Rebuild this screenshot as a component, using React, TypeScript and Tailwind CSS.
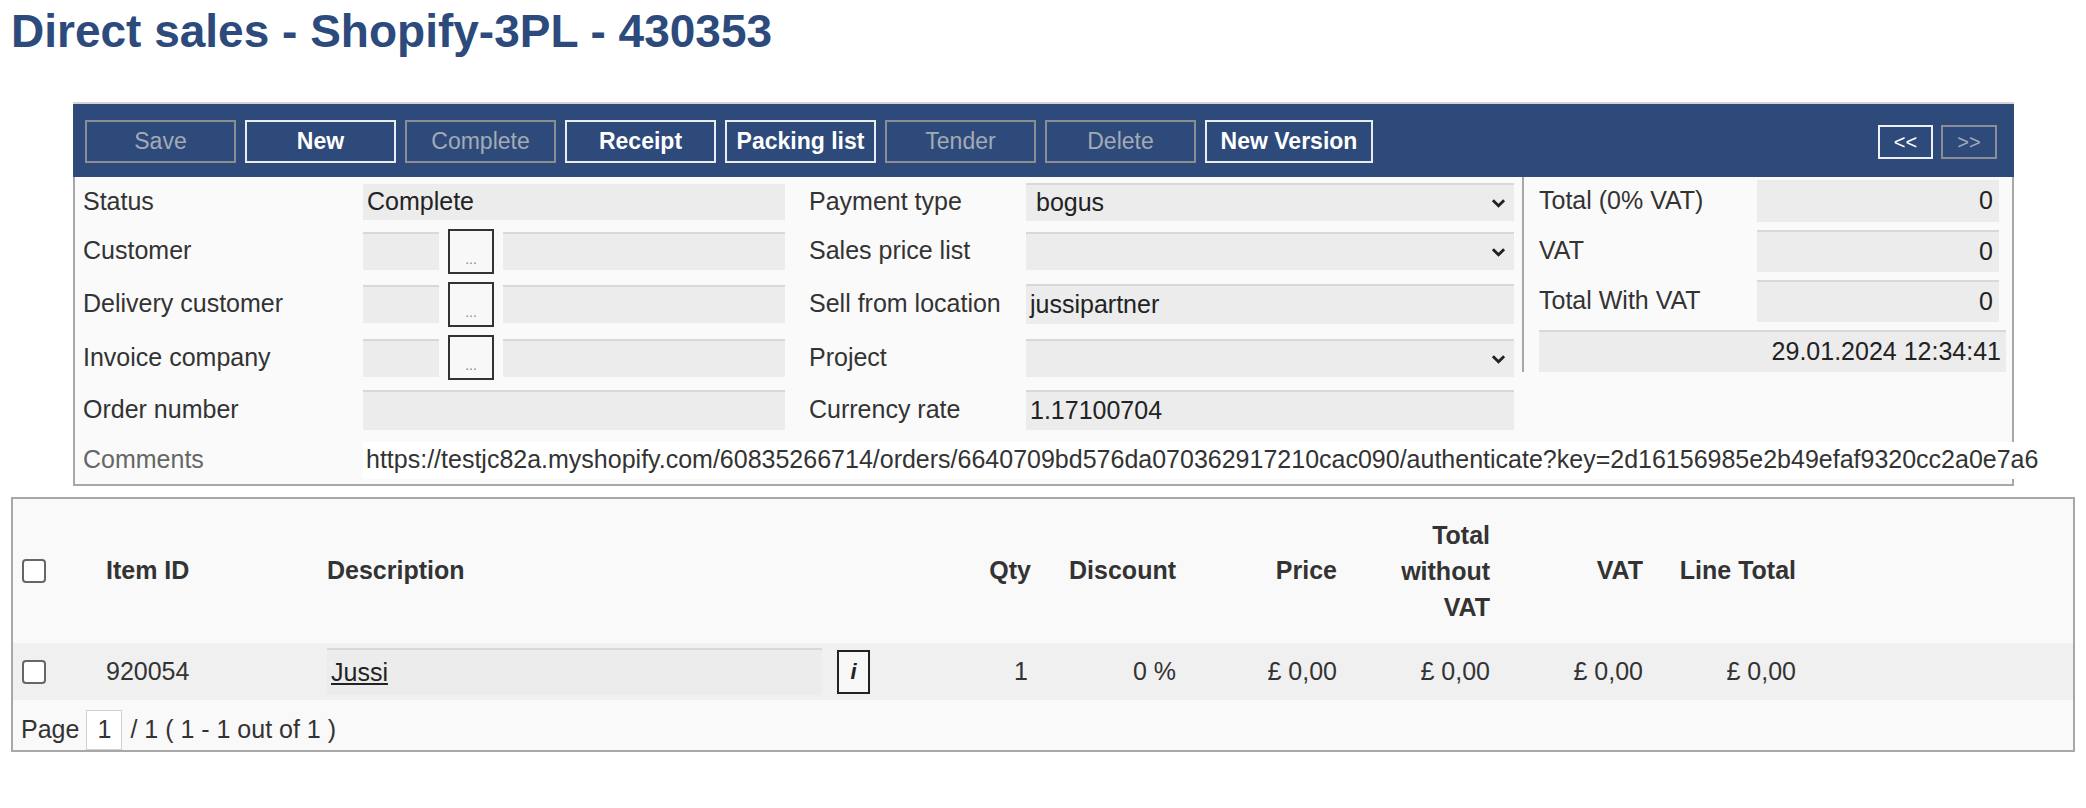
import type { ReactNode } from 'react';

type ToolBtn = { label: string; enabled: boolean; wide?: boolean };

const toolButtons: ToolBtn[] = [
  { label: 'Save', enabled: false },
  { label: 'New', enabled: true },
  { label: 'Complete', enabled: false },
  { label: 'Receipt', enabled: true },
  { label: 'Packing list', enabled: true },
  { label: 'Tender', enabled: false },
  { label: 'Delete', enabled: false },
  { label: 'New Version', enabled: true, wide: true },
];

function Field({ className = '', plain = false, children }: { className?: string; plain?: boolean; children?: ReactNode }) {
  return (
    <div
      className={`flex items-center bg-[#ececec] px-[4px] text-[25px] text-[#222] ${
        plain ? '' : 'border-t-2 border-[#d8d8d8]'
      } ${className}`}
    >
      {children}
    </div>
  );
}

function Chevron() {
  return (
    <svg viewBox="0 0 16 10" className="ml-auto mr-[4px] h-[10px] w-[15px]" fill="none" stroke="#222" strokeWidth="3">
      <path d="M2 2l6 6 6-6" />
    </svg>
  );
}

function SelectField({ value }: { value?: string }) {
  return (
    <Field className="h-[38px] pl-[10px]">
      <span>{value}</span>
      <Chevron />
    </Field>
  );
}

function LookupField() {
  return (
    <div className="flex items-center gap-[9px]">
      <Field className="h-[38px] w-[76px]" />
      <button
        type="button"
        className="flex h-[45px] w-[46px] items-end justify-center border-2 border-[#333] bg-[#f8f8f8] pb-[6px] text-[14px] leading-none text-[#888]"
      >
        ...
      </button>
      <Field className="h-[38px] flex-1" />
    </div>
  );
}

function Label({ children, className = '' }: { children: ReactNode; className?: string }) {
  return <div className={`text-[25px] text-[#333] ${className}`}>{children}</div>;
}

function Checkbox() {
  return <div className="h-[24px] w-[24px] rounded-[4px] border-2 border-[#666] bg-white" />;
}

export default function App() {
  return (
    <div className="min-h-screen bg-white px-[11px] font-['Liberation_Sans',Arial,sans-serif] text-[#333]">
      <h1 className="pt-[9px] text-[46px] font-bold leading-[45px] text-[#2c4a7c]">Direct sales - Shopify-3PL - 430353</h1>

      <div className="ml-[62px] mt-[48px] w-[1941px]">
        <div className="flex h-[75px] items-center border-t-2 border-[#d4d4d4] bg-[#2d4a7a] pl-[12px] pr-[17px] pt-[2px]">
          <div className="flex gap-[9px]">
            {toolButtons.map((b) => (
              <button
                key={b.label}
                type="button"
                className={`h-[43px] ${b.wide ? 'w-[168px]' : 'w-[151px]'} border-2 text-[23px] leading-none ${
                  b.enabled ? 'border-[#e8ebf0] font-bold text-white' : 'border-[#8a8d94] text-[#a4aab5]'
                }`}
              >
                {b.label}
              </button>
            ))}
          </div>
          <div className="ml-auto flex gap-[8px]">
            <button type="button" className="h-[34px] w-[55px] border-2 border-[#eef0f4] text-[20px] leading-none text-white">
              &lt;&lt;
            </button>
            <button type="button" className="h-[34px] w-[56px] border-2 border-[#8a8d94] text-[20px] leading-none text-[#a4aab5]">
              &gt;&gt;
            </button>
          </div>
        </div>

        <div className="border-2 border-t-0 border-[#a8a8a8] bg-[#fafafa]">
          <div className="flex items-start gap-[8px]">
            <div className="grid grid-cols-[280px_422px_241px_488px] grid-rows-[46px_52px_54px_53px_52px] items-center pl-[8px] pt-[2px]">
              <Label>Status</Label>
              <Field plain className="h-[36px]">Complete</Field>
              <Label className="pl-[24px]">Payment type</Label>
              <SelectField value="bogus" />

              <Label>Customer</Label>
              <LookupField />
              <Label className="pl-[24px]">Sales price list</Label>
              <SelectField />

              <Label>Delivery customer</Label>
              <LookupField />
              <Label className="pl-[24px]">Sell from location</Label>
              <Field className="h-[40px]">jussipartner</Field>

              <Label>Invoice company</Label>
              <LookupField />
              <Label className="pl-[24px]">Project</Label>
              <SelectField />

              <Label>Order number</Label>
              <Field className="h-[40px]" />
              <Label className="pl-[24px]">Currency rate</Label>
              <Field className="h-[40px]">1.17100704</Field>
            </div>

            <div className="grid flex-1 grid-cols-[1fr_242px] items-center gap-y-[8px] border-l-2 border-[#a8a8a8] pl-[15px] pr-[13px] pt-[3px]">
              <Label>Total (0% VAT)</Label>
              <Field plain className="h-[42px] justify-end pr-[6px]">0</Field>
              <Label>VAT</Label>
              <Field className="h-[42px] justify-end pr-[6px]">0</Field>
              <Label>Total With VAT</Label>
              <Field className="h-[42px] justify-end pr-[6px]">0</Field>
              <Field className="col-span-2 mr-[-7px] h-[42px] justify-end pr-[5px]">29.01.2024 12:34:41</Field>
            </div>
          </div>

          <div className="flex h-[48px] items-center pl-[8px]">
            <Label className="w-[280px] shrink-0 text-[#666]">Comments</Label>
            <div className="relative z-10 flex h-[37px] w-max shrink-0 items-center whitespace-nowrap bg-white px-[3px] text-[25px] text-[#333]">
              https://testjc82a.myshopify.com/60835266714/orders/6640709bd576da070362917210cac090/authenticate?key=2d16156985e2b49efaf9320cc2a0e7a6
            </div>
          </div>
        </div>
      </div>

      <div className="mt-[11px] border-2 border-[#a8a8a8] bg-[#f9f9f9] text-[25px] text-[#333]">
        <div className="grid h-[144px] grid-cols-[93px_221px_573px_131px_145px_161px_153px_153px_153px_1fr] items-center font-bold">
          <div className="pl-[9px]">
            <Checkbox />
          </div>
          <div>Item ID</div>
          <div>Description</div>
          <div className="text-right">Qty</div>
          <div className="text-right">Discount</div>
          <div className="text-right">Price</div>
          <div className="text-right leading-[36px]">
            Total
            <br />
            without
            <br />
            VAT
          </div>
          <div className="text-right">VAT</div>
          <div className="text-right">Line Total</div>
          <div />
        </div>

        <div className="grid h-[57px] grid-cols-[93px_221px_573px_131px_145px_161px_153px_153px_153px_1fr] items-center bg-[#f0f0f0]">
          <div className="pl-[9px]">
            <Checkbox />
          </div>
          <div>920054</div>
          <div className="flex items-center gap-[15px]">
            <Field className="h-[47px] w-[495px]">
              <span className="underline">Jussi</span>
            </Field>
            <button
              type="button"
              className="flex h-[44px] w-[33px] items-center justify-center border-2 border-[#222] bg-[#f8f8f8] text-[22px] font-bold italic text-[#222]"
            >
              i
            </button>
          </div>
          <div className="pr-[3px] text-right">1</div>
          <div className="text-right">0 %</div>
          <div className="text-right">£ 0,00</div>
          <div className="text-right">£ 0,00</div>
          <div className="text-right">£ 0,00</div>
          <div className="text-right">£ 0,00</div>
          <div />
        </div>

        <div className="flex h-[50px] items-end pl-[8px]">
          <div className="flex h-[40px] items-center">
            <span>Page</span>
            <div className="ml-[7px] flex h-[40px] w-[36px] items-center justify-center border border-[#d0d0d0] bg-white">1</div>
            <span className="ml-[8px]">/ 1 ( 1 - 1 out of 1 )</span>
          </div>
        </div>
      </div>
    </div>
  );
}
